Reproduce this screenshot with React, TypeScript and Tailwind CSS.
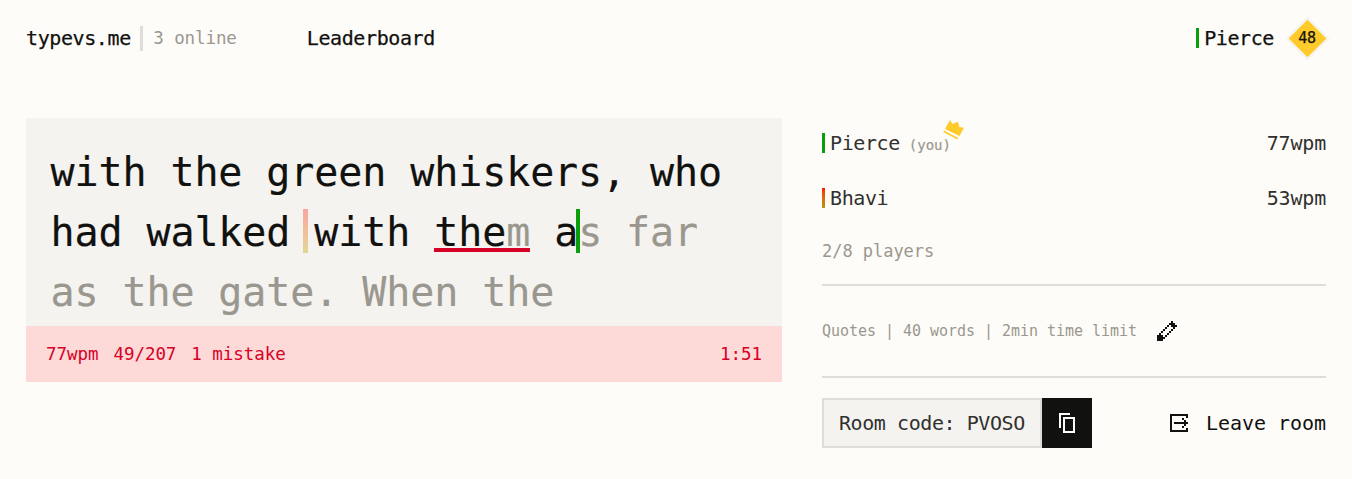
import React from "react";

const Row = ({ bar, name, you, wpm }: { bar: string; name: string; you?: boolean; wpm: string }) => (
  <div className="flex h-[50px] items-center justify-between text-[20px] tracking-[-0.4px] text-[#30302e]">
    <div className="flex items-center">
      <span className={`h-5 w-[3px] ${bar}`} />
      <span className="ml-[5px]">{name}</span>
      {you && (
        <span className="relative ml-[9px] mt-[4px] text-[14px] tracking-[-0.03px] text-[#9a978f] [-webkit-text-stroke:0.2px]">
          (you)
          <svg className="absolute -top-[16px] left-[34px] h-[21px] w-[22px]" viewBox="0 0 22 21" fill="#ffcb2b">
            <path d="M7 1l2.5 4L15 2.7l1.3 5.3 4.7.7L16.5 17 2 10zM1 11.5l14.2 7.4-.7 1.6L.3 13z" />
          </svg>
        </span>
      )}
    </div>
    <span className="tracking-[-0.2px]">{wpm}</span>
  </div>
);

export default function App() {
  return (
    <div className="h-[479px] overflow-hidden whitespace-pre bg-[#fefcf8] px-[26px] font-['DejaVu_Sans_Mono',monospace] tracking-[-0.032px] text-[#11110f]">
      <header className="flex h-[76px] items-center justify-between text-[20px] tracking-[-0.4px] [-webkit-text-stroke:0.25px]">
        <div className="flex items-center">
          <span>typevs.me</span>
          <span className="ml-[9.5px] h-[25px] w-[3px] bg-[#deddd9]" />
          <span className="ml-[10px] text-[17.5px] tracking-[-0.1px] text-[#9a978f] [-webkit-text-stroke:0]">3 online</span>
          <span className="ml-[70px]">Leaderboard</span>
        </div>
        <div className="flex items-center">
          <span className="h-5 w-[3px] bg-[#0a9f0a]" />
          <span className="ml-[5px]">Pierce</span>
          <div className="ml-[14px] grid h-[38px] w-[38px] place-items-center">
            <span className="col-start-1 row-start-1 h-[27px] w-[27px] rotate-45 bg-[#ffcb2b] outline-2 outline-[#f5f3f0]" />
            <span className="z-10 col-start-1 row-start-1 text-[15px]">48</span>
          </div>
        </div>
      </header>

      <main className="mt-[42px] flex items-start gap-10">
        <section className="w-[756px] bg-[#f5f3f0]">
          <div className="h-[208px] pl-[24.5px] pt-6 text-[40px] leading-[60px] tracking-[-0.1px] [-webkit-text-stroke:0.2px]">
            <div>with the green whiskers, who</div>
            <div>
              had walked<span className="relative"> <i className="absolute left-[13px] top-0 h-[44px] w-[5px] bg-linear-to-b from-[#faa5a0] to-[#e2d695]" /></span>with{" "}
              <span className="relative">the<span className="text-[#9a978f]">m</span><i className="absolute bottom-[3px] left-0 h-1 w-full bg-[#d70026]" /></span>{" "}
              a<span className="relative text-[#9a978f]"><i className="absolute -left-[2px] top-0 h-[44px] w-1 bg-[#0a9f0a]" />s far</span>
            </div>
            <div className="text-[#9a978f]">as the gate. When the</div>
          </div>
          <div className="flex h-14 items-center justify-between bg-[#fdd9d7] px-5 text-[17.5px] tracking-[-0.05px] text-[#d70026]">
            <div className="flex gap-[15px]">
              <span>77wpm</span>
              <span>49/207</span>
              <span>1 mistake</span>
            </div>
            <span>1:51</span>
          </div>
        </section>

        <aside className="flex w-[504px] flex-col">
          <div className="flex flex-col gap-[5px]">
            <Row bar="bg-[#0a9f0a]" name="Pierce" you wpm="77wpm" />
            <Row bar="bg-linear-to-b from-[#fb0505] to-[#b69610]" name="Bhavi" wpm="53wpm" />
          </div>
          <div className="flex h-[61px] items-center pb-[4px] text-[17px] text-[#9a978f]">2/8 players</div>
          <div className="flex h-[94px] items-center border-y-2 border-[#deddd9] text-[15px] text-[#9a978f]">
            <span>Quotes | 40 words | 2min time limit</span>
            <svg className="ml-[18px] h-6 w-6" viewBox="0 0 24 24" fill="#11110f" shapeRendering="crispEdges">
              <path d="M16 2h2v2h-2zM14 4h6v2h-6zM12 6h2v2h-2zM16 6h6v2h-6zM10 8h2v2h-2zM18 8h2v2h-2zM8 10h2v2H8zM16 10h2v2h-2zM6 12h2v2H6zM14 12h2v2h-2zM4 14h2v2H4zM12 14h2v2h-2zM2 16h6v6H2zM10 16h2v2h-2zM8 18h2v2H8z" />
            </svg>
          </div>
          <div className="mt-5 flex items-center">
            <div className="flex h-[50px] w-[220px] items-center border-2 border-[#deddd9] bg-[#f5f3f0] pl-[15px] text-[20px] tracking-[-0.43px] text-[#30302e]">Room code: PVOSO</div>
            <button className="flex h-[50px] w-[50px] items-center justify-center bg-[#11110f]">
              <svg className="h-6 w-6" viewBox="0 0 24 24" fill="#fefcf8">
                <path d="M4 2h11v2H6v13H4V2zm4 4h12v16H8V6zm2 2v12h8V8h-8z" />
              </svg>
            </button>
            <button className="ml-auto flex items-center text-[20px]">
              <svg className="mr-[15px] h-6 w-6" viewBox="0 0 24 24" fill="#11110f">
                <path d="M5 3h16v4h-2V5H5v14h14v-2h2v4H3V3h2zm16 8h-2V9h-2V7h-2v2h2v2H7v2h10v2h-2v2h2v-2h2v-2h2v-2z" />
              </svg>
              Leave room
            </button>
          </div>
        </aside>
      </main>
    </div>
  );
}
